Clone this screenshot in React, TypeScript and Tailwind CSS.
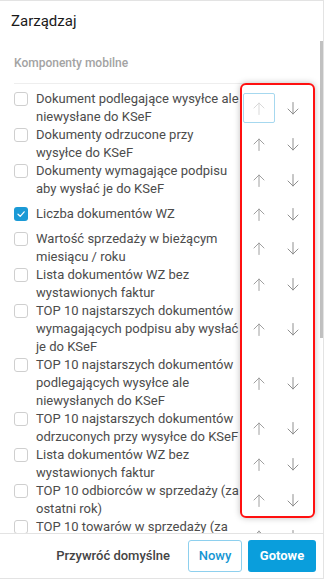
import React from "react";

type Row = { lines: string[]; checked?: boolean; h: number };

const rows: Row[] = [
  { lines: ["Dokument podlegające wysyłce ale", "niewysłane do KSeF"], h: 36 },
  { lines: ["Dokumenty odrzucone przy", "wysyłce do KSeF"], h: 36 },
  { lines: ["Dokumenty wymagające podpisu", "aby wysłać je do KSeF"], h: 36 },
  { lines: ["Liczba dokumentów WZ"], checked: true, h: 32 },
  { lines: ["Wartość sprzedaży w bieżącym", "miesiącu / roku"], h: 36 },
  { lines: ["Lista dokumentów WZ bez", "wystawionych faktur"], h: 36 },
  { lines: ["TOP 10 najstarszych dokumentów", "wymagających podpisu aby wysłać", "je do KSeF"], h: 54 },
  { lines: ["TOP 10 najstarszych dokumentów", "podlegających wysyłce ale", "niewysłanych do KSeF"], h: 54 },
  { lines: ["TOP 10 najstarszych dokumentów", "odrzuconych przy wysyłce do KSeF"], h: 36 },
  { lines: ["Lista dokumentów WZ bez", "wystawionych faktur"], h: 36 },
  { lines: ["TOP 10 odbiorców w sprzedaży (za", "ostatni rok)"], h: 36 },
  { lines: ["TOP 10 towarów w sprzedaży (za"], h: 36 },
];

function Arrow({ up, color }: { up: boolean; color: string }) {
  return (
    <svg width="12" height="13" viewBox="0 0 12 13" fill="none" stroke={color} strokeWidth="1" strokeLinecap="round" strokeLinejoin="round" style={{ transform: up ? undefined : "rotate(180deg)" }}>
      <path d="M6 1 L6 12.5" />
      <path d="M1 6 L6 1 L11 6" />
    </svg>
  );
}

function Checkbox({ checked }: { checked?: boolean }) {
  if (checked) {
    return (
      <div className="w-[14px] h-[14px] rounded-[3px] bg-[#1b9ad6] flex items-center justify-center shrink-0 mt-[2px]">
        <svg width="10" height="10" viewBox="0 0 10 10" fill="none" stroke="#fff" strokeWidth="1.2" strokeLinecap="round" strokeLinejoin="round">
          <path d="M2 5.2 L4.2 7.3 L8.2 2.8" />
        </svg>
      </div>
    );
  }
  return <div className="w-[14px] h-[14px] rounded-[3px] border border-[#cfcfcf] bg-white shrink-0 mt-[2px]" />;
}

export default function App() {
  return (
    <div className="relative w-[324px] h-[579px] bg-white border-t border-b border-r border-[#e3e3e3] flex flex-col overflow-hidden" style={{ fontFamily: "Roboto, 'Noto Sans', sans-serif" }}>
      <div className="h-[40px] shrink-0 flex items-center pl-[11px]">
        <span className="text-[15px] text-[#1a1a1a] leading-none">Zarządzaj</span>
      </div>
      <div className="relative h-[492px] shrink-0 overflow-hidden">
        <div className="mx-[14px] pt-[14px] pb-[12px] border-b border-[#eeeeee] w-[296px]">
          <div className="text-[12px] leading-[16px] font-medium text-[#a3a3a3]">Komponenty mobilne</div>
        </div>
        <div className="mt-[6px] flex flex-col">
          {rows.map((r, i) => (
            <div key={i} className="flex items-center pl-[14px]" style={{ height: r.h }}>
              <div className={i === rows.length - 1 ? "w-[229px] self-start flex items-start gap-[8px]" : "w-[229px] flex items-start gap-[8px]"}>
                <Checkbox checked={r.checked} />
                <div className="text-[13px] leading-[18px] text-[#4c4c4c] whitespace-nowrap">
                  {r.lines.map((l, j) => (
                    <div key={j}>{l}</div>
                  ))}
                </div>
              </div>
              <div className={i === 0 ? "w-[32px] h-[30px] flex items-center justify-center border border-[#a6d8ef] rounded-[2px]" : "w-[32px] h-[30px] flex items-center justify-center"}>
                <Arrow up color={i === 0 ? "#d9d9d9" : "#a0a0a0"} />
              </div>
              <div className="w-[32px] h-[30px] ml-[2px] flex items-center justify-center">
                <Arrow up={false} color="#8f8f8f" />
              </div>
            </div>
          ))}
        </div>
        <div className="absolute left-[320px] top-0 w-[3px] h-[297px] bg-[#c1c1c1]" />
      </div>
      <div className="flex-1 border-t border-[#e3e3e3] flex items-center justify-end pr-[7px] gap-[6px]">
        <button className="h-[32px] px-[12px] shrink-0 whitespace-nowrap text-[13px] font-medium text-[#444]">Przywróć domyślne</button>
        <button className="h-[32px] w-[54px] shrink-0 rounded-[3px] border border-[#8ed0ee] text-[13px] font-medium text-[#1596d3] bg-white">Nowy</button>
        <button className="h-[32px] w-[68px] shrink-0 rounded-[3px] bg-[#0a9edc] text-[13px] font-bold text-white">Gotowe</button>
      </div>
      <div className="absolute left-[240px] top-[82px] w-[75px] h-[435px] border-2 border-[#ff1010] rounded-[6px] shadow-[0_0_6px_rgba(0,0,0,0.25)] pointer-events-none" />
    </div>
  );
}
